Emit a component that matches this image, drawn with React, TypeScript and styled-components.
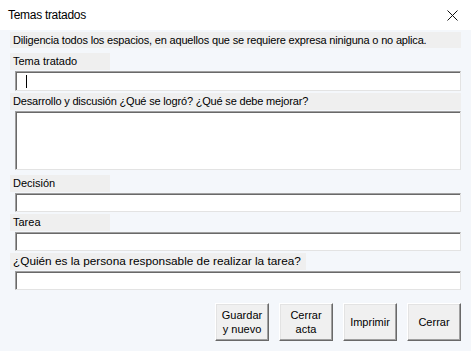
import React from 'react';
import styled, { createGlobalStyle } from 'styled-components';

const GlobalStyle = createGlobalStyle`
  html, body {
    margin: 0;
    padding: 0;
    background: #f4f7fb;
  }
`;

const Window = styled.div`
  width: 471px;
  height: 351px;
  background: #f4f7fb;
  display: flex;
  flex-direction: column;
  font-family: "Liberation Sans", Arial, sans-serif;
  color: #000;
  overflow: hidden;
`;

const TitleBar = styled.div`
  height: 30px;
  background: #ffffff;
  display: flex;
  align-items: center;
  justify-content: space-between;
  padding: 0 13px 0 8px;
  font-size: 12px;
  letter-spacing: -0.3px;
`;

const Body = styled.div`
  display: flex;
  flex-direction: column;
  padding: 1px 10px 0 10px;
`;

const Label = styled.div<{ $width?: number; $gap?: number; $size?: number; $tight?: boolean }>`
  width: ${({ $width }) => ($width ? `${$width}px` : '100%')};
  height: 17px;
  margin-top: ${({ $gap }) => $gap ?? 2}px;
  background: #efefef;
  font-size: ${({ $size }) => $size ?? 11}px;
  letter-spacing: ${({ $tight }) => ($tight ? '-0.18px' : 'normal')};
  line-height: 17px;
  padding-left: 3px;
  box-sizing: border-box;
  white-space: nowrap;
`;

const Notice = styled(Label)`
  height: 16px;
  line-height: 16px;
`;

const Input = styled.div<{ $height?: number }>`
  margin: 1px 0 0 5px;
  width: 446px;
  height: ${({ $height }) => $height ?? 20}px;
  box-sizing: border-box;
  background: #ffffff;
  border: 1px solid;
  border-color: #a0a0a0 #e3e3e3 #e3e3e3 #a0a0a0;
  box-shadow: inset 1px 1px 0 #696969;
  position: relative;
`;

const Caret = styled.span`
  position: absolute;
  left: 10px;
  top: 3px;
  width: 1px;
  height: 13px;
  background: #000;
`;

const ButtonRow = styled.div`
  display: flex;
  justify-content: flex-end;
  gap: 10px;
  margin-top: 13px;
`;

const Button = styled.button`
  width: 54px;
  height: 38px;
  padding: 0;
  background: #f0f0f0;
  border: 1px solid;
  border-color: #ffffff #696969 #696969 #ffffff;
  box-shadow: inset -1px -1px 0 #a0a0a0, inset 1px 1px 0 #e3e3e3;
  font-family: "Liberation Sans", Arial, sans-serif;
  font-size: 11px;
  line-height: 14px;
  color: #000;
`;

function CloseIcon () {
  return (
    <svg width='11' height='11' viewBox='0 0 11 11'>
      <path d='M0.5 0.5 L10.5 10.5 M10.5 0.5 L0.5 10.5' stroke='#111' strokeWidth='1' fill='none' />
    </svg>
  );
}

export default function App () {
  return (
    <Window>
      <GlobalStyle />
      <TitleBar>
        <span>Temas tratados</span>
        <CloseIcon />
      </TitleBar>
      <Body>
        <Notice $gap={1} $tight>
          Diligencia todos los espacios, en aquellos que se requiere expresa niniguna o no aplica.
        </Notice>
        <Label $width={100} $gap={5}>Tema tratado</Label>
        <Input><Caret /></Input>
        <Label $gap={2} $tight>Desarrollo y discusión ¿Qué se logró? ¿Qué se debe mejorar?</Label>
        <Input $height={59} />
        <Label $width={100} $gap={5}>Decisión</Label>
        <Input $height={19} />
        <Label $width={100} $gap={2}>Tarea</Label>
        <Input $height={19} />
        <Label $width={296} $gap={2} $size={11.8}>¿Quién es la persona responsable de realizar la tarea?</Label>
        <Input $height={19} />
        <ButtonRow>
          <Button>Guardar<br />y nuevo</Button>
          <Button>Cerrar<br />acta</Button>
          <Button>Imprimir</Button>
          <Button>Cerrar</Button>
        </ButtonRow>
      </Body>
    </Window>
  );
}
